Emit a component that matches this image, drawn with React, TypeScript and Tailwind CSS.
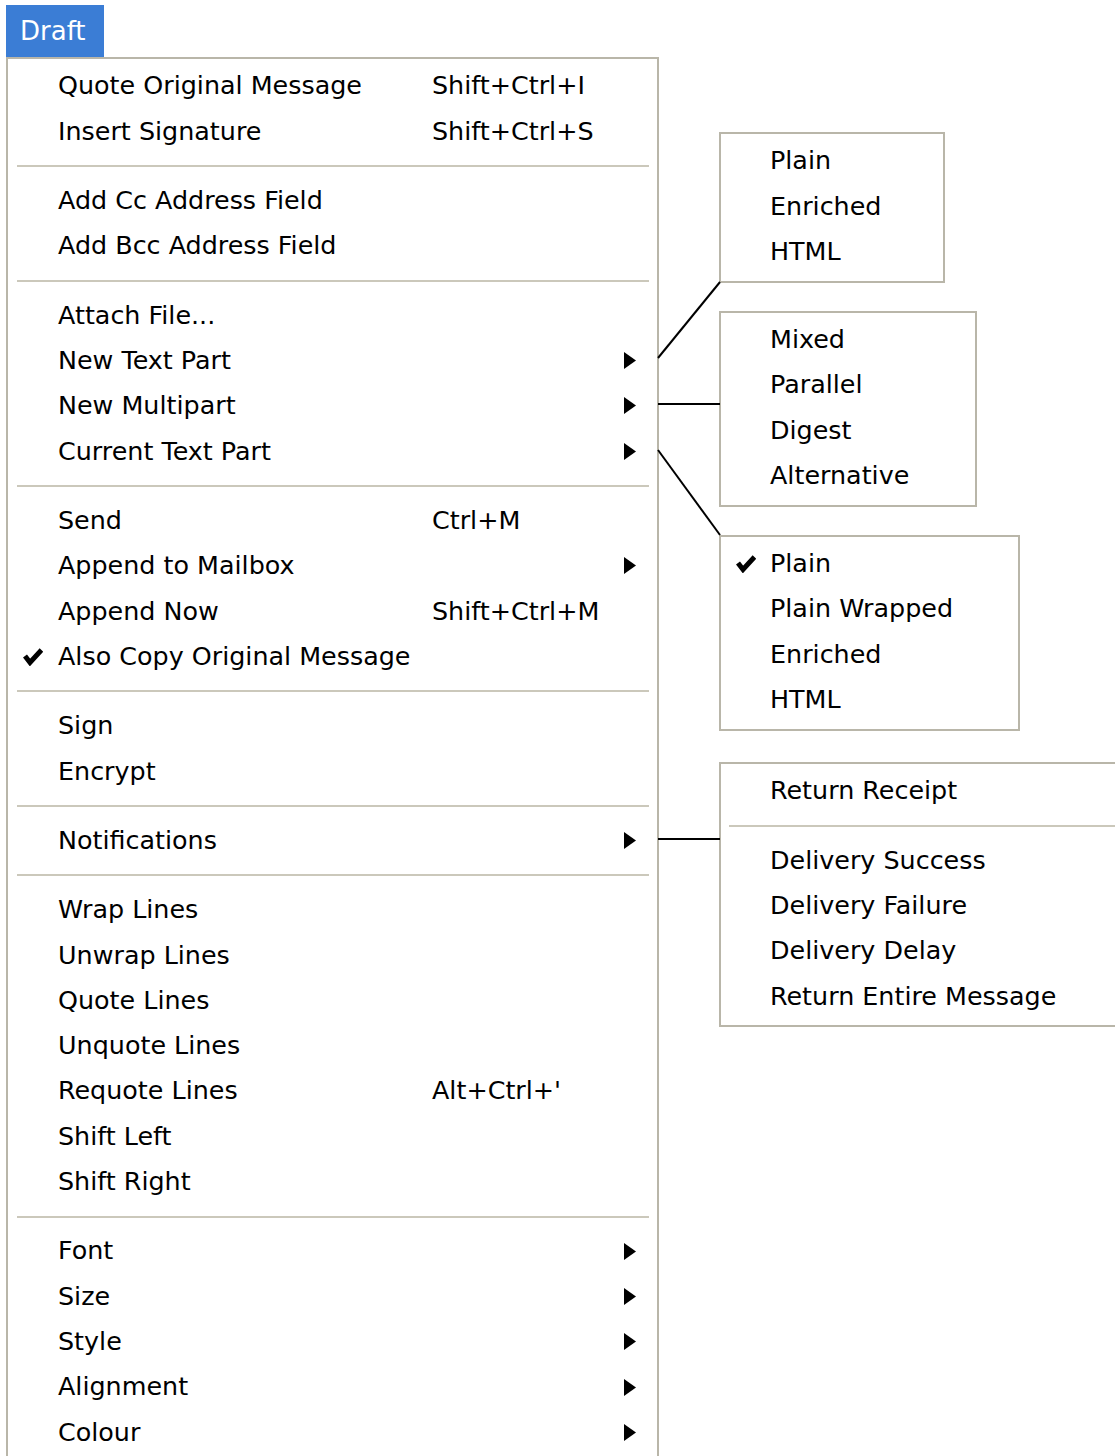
import React from 'react';

type Item = {
  label: string;
  shortcut?: string;
  sub?: boolean;
  checked?: boolean;
};

type Section = Item[];

const mainSections: Section[] = [
  [
    { label: 'Quote Original Message', shortcut: 'Shift+Ctrl+I' },
    { label: 'Insert Signature', shortcut: 'Shift+Ctrl+S' },
  ],
  [{ label: 'Add Cc Address Field' }, { label: 'Add Bcc Address Field' }],
  [
    { label: 'Attach File...' },
    { label: 'New Text Part', sub: true },
    { label: 'New Multipart', sub: true },
    { label: 'Current Text Part', sub: true },
  ],
  [
    { label: 'Send', shortcut: 'Ctrl+M' },
    { label: 'Append to Mailbox', sub: true },
    { label: 'Append Now', shortcut: 'Shift+Ctrl+M' },
    { label: 'Also Copy Original Message', checked: true },
  ],
  [{ label: 'Sign' }, { label: 'Encrypt' }],
  [{ label: 'Notifications', sub: true }],
  [
    { label: 'Wrap Lines' },
    { label: 'Unwrap Lines' },
    { label: 'Quote Lines' },
    { label: 'Unquote Lines' },
    { label: 'Requote Lines', shortcut: "Alt+Ctrl+'" },
    { label: 'Shift Left' },
    { label: 'Shift Right' },
  ],
  [
    { label: 'Font', sub: true },
    { label: 'Size', sub: true },
    { label: 'Style', sub: true },
    { label: 'Alignment', sub: true },
    { label: 'Colour', sub: true },
  ],
];

const CheckMark = () => (
  <svg width="20" height="19" viewBox="0 0 20 19">
    <path d="M2 9 L7 15.5 L18.5 3" fill="none" stroke="#000" strokeWidth="5" />
  </svg>
);

const Arrow = () => (
  <svg width="12" height="17" viewBox="0 0 12 17">
    <polygon points="0,0 12,8.5 0,17" fill="#000" />
  </svg>
);

function MainRow({ item }: { item: Item }) {
  return (
    <div className="flex items-center h-[45.33px]">
      <div className="w-[50px] pl-[15px] flex items-center">{item.checked && <CheckMark />}</div>
      <div className="w-[374px] whitespace-nowrap">{item.label}</div>
      <div className="flex-1 whitespace-nowrap">{item.shortcut}</div>
      <div className="w-[12px] mr-[21px] flex items-center">{item.sub && <Arrow />}</div>
    </div>
  );
}

function SubMenu({ items, width, className }: { items: Section[]; width: string; className: string }) {
  return (
    <div className={`border-2 border-[#b9b6a9] bg-white pt-[4.3px] pb-[6.5px] ${width} ${className}`}>
      {items.map((section, si) => (
        <div key={si}>
          {si > 0 && (
            <div className="h-[24px] flex items-center pl-[8px]">
              <div className="h-[2px] w-full bg-[#cbc8bb]" />
            </div>
          )}
          {section.map((item) => (
            <div key={item.label} className="flex items-center h-[45.33px]">
              <div className="w-[49px] pl-[15px] flex items-center">{item.checked && <CheckMark />}</div>
              <div className="whitespace-nowrap">{item.label}</div>
            </div>
          ))}
        </div>
      ))}
    </div>
  );
}

export default function App() {
  return (
    <div
      className="relative w-[1115px] h-[1456px] overflow-hidden bg-white text-black text-[25.4px] leading-none pl-[6px] pt-[5px]"
      style={{ fontFamily: '"DejaVu Sans", Verdana, sans-serif' }}
    >
      {/* Menu bar tab */}
      <div className="w-[98px] h-[52px] bg-[#3b7dd5] text-white text-[26px] flex items-center pl-[14px]">Draft</div>

      <div className="flex items-start">
        {/* Main drop-down */}
        <div className="w-[653px] h-[1420px] border-2 border-b-0 border-[#b9b6a9] bg-white pt-[4.3px] shrink-0">
          {mainSections.map((section, si) => (
            <div key={si}>
              {si > 0 && (
                <div className="h-[24px] flex items-center ml-[9px] mr-[8px]">
                  <div className="h-[2px] w-full bg-[#cbc8bb]" />
                </div>
              )}
              {section.map((item) => (
                <MainRow key={item.label} item={item} />
              ))}
            </div>
          ))}
        </div>

        {/* Sub-menus */}
        <div className="ml-[60px] flex flex-col shrink-0">
          <SubMenu
            width="w-[226px]"
            className="mt-[75px]"
            items={[[{ label: 'Plain' }, { label: 'Enriched' }, { label: 'HTML' }]]}
          />
          <SubMenu
            width="w-[258px]"
            className="mt-[28px]"
            items={[[{ label: 'Mixed' }, { label: 'Parallel' }, { label: 'Digest' }, { label: 'Alternative' }]]}
          />
          <SubMenu
            width="w-[301px]"
            className="mt-[28px]"
            items={[
              [
                { label: 'Plain', checked: true },
                { label: 'Plain Wrapped' },
                { label: 'Enriched' },
                { label: 'HTML' },
              ],
            ]}
          />
          <SubMenu
            width="w-[420px]"
            className="mt-[31px]"
            items={[
              [{ label: 'Return Receipt' }],
              [
                { label: 'Delivery Success' },
                { label: 'Delivery Failure' },
                { label: 'Delivery Delay' },
                { label: 'Return Entire Message' },
              ],
            ]}
          />
        </div>
      </div>

      {/* Connector lines between parent items and their sub-menus */}
      <svg className="absolute inset-0 pointer-events-none" width="1115" height="1456">
        <g stroke="#000" strokeWidth="2">
          <line x1="658" y1="358" x2="720" y2="282" />
          <line x1="658" y1="404" x2="720" y2="404" />
          <line x1="658" y1="450" x2="720" y2="535" />
          <line x1="658" y1="839" x2="720" y2="839" />
        </g>
      </svg>
    </div>
  );
}
